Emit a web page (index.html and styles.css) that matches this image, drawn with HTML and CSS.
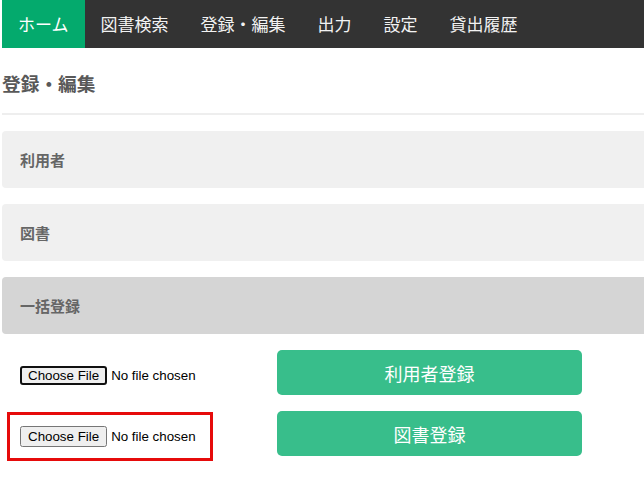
FILE: index.html
```html
<!DOCTYPE html>
<html lang="ja">
<head>
<meta charset="utf-8">
<title>登録・編集</title>
<link rel="stylesheet" href="styles.css">
</head>
<body>
<div class="page">
  <nav class="topnav">
    <a class="nav-item active" href="#">ホーム</a>
    <a class="nav-item" href="#">図書検索</a>
    <a class="nav-item" href="#">登録・編集</a>
    <a class="nav-item" href="#">出力</a>
    <a class="nav-item" href="#">設定</a>
    <a class="nav-item" href="#">貸出履歴</a>
  </nav>
  <h3 class="title">登録・編集</h3>
  <div class="panels">
    <div class="panel">利用者</div>
    <div class="panel">図書</div>
    <div class="panel active">一括登録</div>
  </div>
  <div class="uploads">
    <div class="upload-row">
      <div class="file-cell">
        <input class="file-input focused" type="file">
      </div>
      <button class="submit-btn" type="button">利用者登録</button>
    </div>
    <div class="upload-row">
      <div class="file-cell highlight">
        <input class="file-input" type="file">
      </div>
      <button class="submit-btn" type="button">図書登録</button>
    </div>
  </div>
</div>
</body>
</html>
```

FILE: styles.css
```css
html {
  overflow: hidden;
}

body {
  margin: 0;
  padding: 0;
  background: #fff;
  font-family: "Noto Sans CJK JP", "Noto Sans", sans-serif;
}

.page {
  width: 720px;
  padding-left: 2px;
  padding-bottom: 30px;
}

.topnav {
  display: flex;
  background: #333333;
  height: 48px;
}

.nav-item {
  display: block;
  padding: 0 16px;
  line-height: 48px;
  font-size: 17px;
  color: #f2f2f2;
  text-decoration: none;
}

.nav-item.active {
  background: #04aa6d;
  color: #ffffff;
}

.title {
  margin: 0;
  padding-top: 21px;
  height: 44px;
  font-size: 18.72px;
  line-height: 27px;
  font-weight: bold;
  color: #595959;
  border-bottom: 2px solid #eeeeee;
}

.panels {
  display: flex;
  flex-direction: column;
  gap: 16px;
  margin-top: 16px;
}

.panel {
  height: 57px;
  display: flex;
  align-items: center;
  padding: 0 18px;
  background: #f0f0f0;
  border-radius: 4px;
  font-size: 15px;
  font-weight: bold;
  color: #666666;
}

.panel.active {
  background: #d5d5d5;
}

.uploads {
  display: flex;
  flex-direction: column;
  gap: 16px;
  margin-top: 16px;
}

.upload-row {
  display: flex;
  align-items: flex-start;
  height: 45px;
  gap: 64px;
}

.file-cell {
  box-sizing: border-box;
  flex: none;
  width: 206px;
  height: 49px;
  margin-left: 5px;
  margin-top: 1px;
  padding-left: 10px;
  display: flex;
  align-items: center;
  border: 3px solid transparent;
}

.file-cell.highlight {
  border-color: #e60b0b;
}

.file-input {
  width: 185px;
  margin: 0;
}

.file-input.focused::file-selector-button {
  border: 2px solid #101010;
  border-radius: 3px;
  padding: 0 6px;
  background: #efefef;
  color: #000;
}

.submit-btn {
  flex: none;
  width: 305px;
  height: 45px;
  border: none;
  border-radius: 5px;
  background: #38be8b;
  color: #ffffff;
  font-family: "Noto Sans CJK JP", "Noto Sans", sans-serif;
  font-size: 18px;
  cursor: pointer;
}
```
